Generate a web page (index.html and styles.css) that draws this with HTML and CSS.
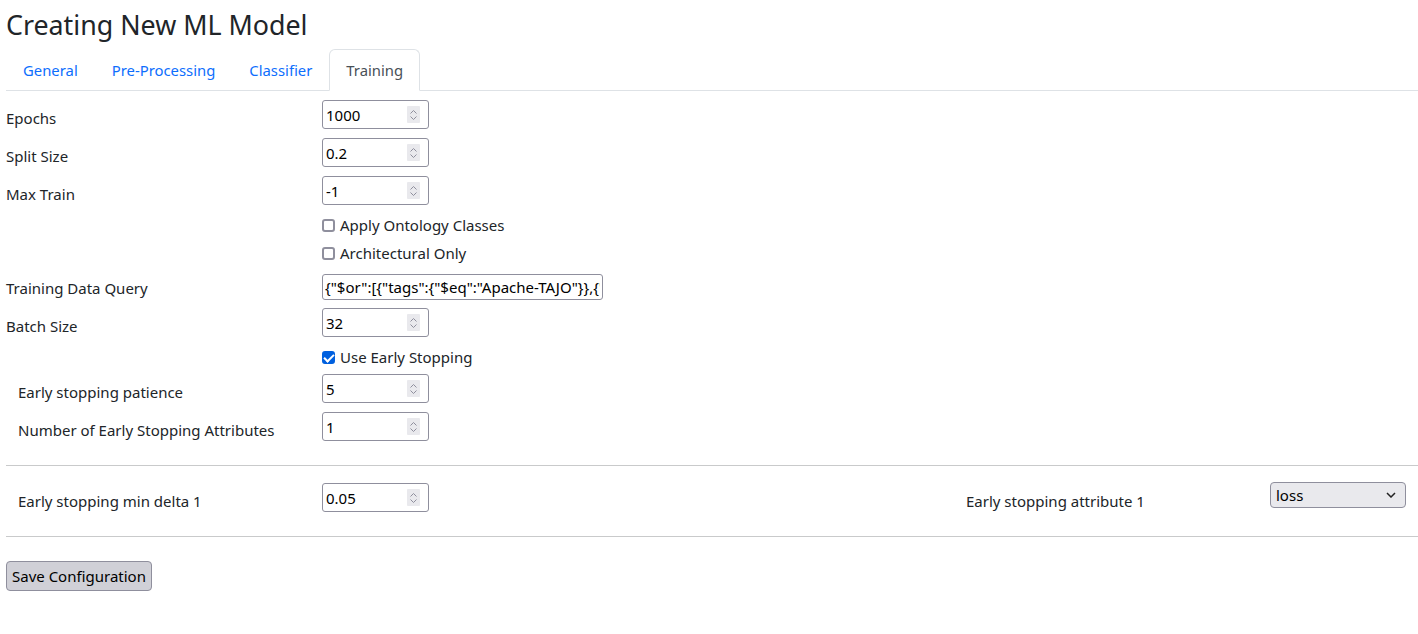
FILE: index.html
```html
<!DOCTYPE html>
<html lang="en">
<head>
<meta charset="utf-8">
<title>Creating New ML Model</title>
<link rel="stylesheet" href="styles.css">
</head>
<body>
<div class="page">
  <h3 class="title">Creating New ML Model</h3>
  <ul class="tabs">
    <li class="tab"><a class="tab-link">General</a></li>
    <li class="tab"><a class="tab-link">Pre-Processing</a></li>
    <li class="tab"><a class="tab-link">Classifier</a></li>
    <li class="tab"><a class="tab-link active">Training</a></li>
  </ul>

  <form class="form">
    <div class="row row-num">
      <label class="lbl">Epochs</label>
      <div class="num"><input class="num-input" type="text" value="1000"><span class="spin"><svg width="9" height="14" viewBox="0 0 9 14"><path d="M1.5 5.5 L4.5 2.5 L7.5 5.5 M1.5 8.5 L4.5 11.5 L7.5 8.5" fill="none" stroke="#8f8f9d" stroke-width="1"/></svg></span></div>
    </div>
    <div class="row row-num">
      <label class="lbl">Split Size</label>
      <div class="num"><input class="num-input" type="text" value="0.2"><span class="spin"><svg width="9" height="14" viewBox="0 0 9 14"><path d="M1.5 5.5 L4.5 2.5 L7.5 5.5 M1.5 8.5 L4.5 11.5 L7.5 8.5" fill="none" stroke="#8f8f9d" stroke-width="1"/></svg></span></div>
    </div>
    <div class="row row-num row-before-check">
      <label class="lbl">Max Train</label>
      <div class="num"><input class="num-input" type="text" value="-1"><span class="spin"><svg width="9" height="14" viewBox="0 0 9 14"><path d="M1.5 5.5 L4.5 2.5 L7.5 5.5 M1.5 8.5 L4.5 11.5 L7.5 8.5" fill="none" stroke="#8f8f9d" stroke-width="1"/></svg></span></div>
    </div>
    <div class="row row-check">
      <span class="lbl-empty"></span>
      <label class="check"><input class="cb" type="checkbox"><span>Apply Ontology Classes</span></label>
    </div>
    <div class="row row-check row-check-last">
      <span class="lbl-empty"></span>
      <label class="check"><input class="cb" type="checkbox"><span>Architectural Only</span></label>
    </div>
    <div class="row row-query">
      <label class="lbl">Training Data Query</label>
      <input class="text-input" type="text" value='{"$or":[{"tags":{"$eq":"Apache-TAJO"}},{"tags":{"$eq":"Apache-Hadoop"}}]}'>
    </div>
    <div class="row row-num row-before-check">
      <label class="lbl">Batch Size</label>
      <div class="num"><input class="num-input" type="text" value="32"><span class="spin"><svg width="9" height="14" viewBox="0 0 9 14"><path d="M1.5 5.5 L4.5 2.5 L7.5 5.5 M1.5 8.5 L4.5 11.5 L7.5 8.5" fill="none" stroke="#8f8f9d" stroke-width="1"/></svg></span></div>
    </div>
    <div class="row row-check row-check-es">
      <span class="lbl-empty"></span>
      <label class="check"><input class="cb" type="checkbox" checked><span>Use Early Stopping</span></label>
    </div>
    <div class="row row-num">
      <label class="lbl lbl-indent">Early stopping patience</label>
      <div class="num"><input class="num-input" type="text" value="5"><span class="spin"><svg width="9" height="14" viewBox="0 0 9 14"><path d="M1.5 5.5 L4.5 2.5 L7.5 5.5 M1.5 8.5 L4.5 11.5 L7.5 8.5" fill="none" stroke="#8f8f9d" stroke-width="1"/></svg></span></div>
    </div>
    <div class="row row-num row-last">
      <label class="lbl lbl-indent">Number of Early Stopping Attributes</label>
      <div class="num"><input class="num-input" type="text" value="1"><span class="spin"><svg width="9" height="14" viewBox="0 0 9 14"><path d="M1.5 5.5 L4.5 2.5 L7.5 5.5 M1.5 8.5 L4.5 11.5 L7.5 8.5" fill="none" stroke="#8f8f9d" stroke-width="1"/></svg></span></div>
    </div>

    <hr class="sep sep-top">

    <div class="attr-row">
      <div class="attr-group attr-group-main">
        <label class="lbl lbl-indent">Early stopping min delta 1</label>
        <div class="num"><input class="num-input" type="text" value="0.05"><span class="spin"><svg width="9" height="14" viewBox="0 0 9 14"><path d="M1.5 5.5 L4.5 2.5 L7.5 5.5 M1.5 8.5 L4.5 11.5 L7.5 8.5" fill="none" stroke="#8f8f9d" stroke-width="1"/></svg></span></div>
      </div>
      <div class="attr-group">
        <label class="lbl lbl-indent">Early stopping attribute 1</label>
        <div class="select-wrap">
          <select class="select"><option>loss</option><option>accuracy</option></select>
          <svg class="select-arrow" width="10" height="6" viewBox="0 0 10 6"><path d="M1 1 L5 5 L9 1" fill="none" stroke="#222" stroke-width="1.5"/></svg>
        </div>
      </div>
    </div>

    <hr class="sep sep-bottom">

    <button class="btn" type="button">Save Configuration</button>
  </form>
</div>
</body>
</html>
```

FILE: styles.css
```css
* { box-sizing: border-box; }

html, body {
  margin: 0;
  padding: 0;
  background: #ffffff;
}

body {
  font-family: "Noto Sans", "Open Sans", sans-serif;
  font-size: 15px;
  line-height: 24px;
  color: #212529;
}

.page {
  padding-left: 6px;
}

.title {
  margin: 8px 0 7px 0;
  font-size: 26.8px;
  line-height: 34px;
  font-weight: 400;
  color: #212529;
}

.tabs {
  display: flex;
  list-style: none;
  margin: 0;
  padding: 0;
  border-bottom: 1px solid #dee2e6;
}

.tab {
  margin-bottom: -1px;
}

.tab-link {
  display: block;
  padding: 8px 16px;
  border: 1px solid transparent;
  border-top-left-radius: 6px;
  border-top-right-radius: 6px;
  font-size: 14.85px;
  color: #0d6efd;
  cursor: pointer;
}

.tab-link.active {
  color: #495057;
  background: #ffffff;
  border-color: #dee2e6 #dee2e6 #ffffff;
}

.form {
  padding-top: 9px;
}

.row {
  display: grid;
  grid-template-columns: 316px auto;
  align-items: start;
  justify-items: start;
}

.row-num { height: 29px; margin-bottom: 9px; }
.row-before-check { margin-bottom: 8px; }
.row-check { height: 24px; margin-bottom: 4px; }
.row-check-last { margin-bottom: 5px; }
.row-check-es { margin-bottom: 5px; }
.row-last { margin-bottom: 0; }
.row-query { height: 30px; margin-bottom: 8px; }

.lbl {
  display: block;
  padding-top: 6px;
  line-height: 24px;
}

.lbl-indent {
  padding-left: 12px;
}

.num {
  display: flex;
  align-items: center;
  width: 107px;
  height: 29px;
  border: 1px solid #8f8f9d;
  border-radius: 3px;
  background: #ffffff;
}

.num-input {
  flex: 1;
  min-width: 0;
  border: 0;
  outline: none;
  padding: 0 0 0 3px;
  font: inherit;
  color: #000000;
  background: transparent;
  height: 27px;
}

.spin {
  display: flex;
  align-items: center;
  justify-content: center;
  width: 13px;
  height: 17px;
  margin-right: 8px;
  background: #e9e9ed;
  border-radius: 1px;
}

.text-input {
  width: 281px;
  height: 26px;
  margin-top: 4px;
  border: 1px solid #8f8f9d;
  border-radius: 3px;
  padding: 0 2px;
  font: inherit;
  color: #000000;
  outline: none;
}

.check {
  display: flex;
  align-items: center;
  gap: 5px;
  line-height: 24px;
}

.cb {
  appearance: none;
  -webkit-appearance: none;
  margin: 0;
  width: 13px;
  height: 13px;
  border: 2px solid #8f8f9d;
  border-radius: 3px;
  background: #ffffff;
  position: relative;
}

.cb:checked {
  background: #0060df;
  border-color: #0060df;
}

.cb:checked::after {
  content: "";
  position: absolute;
  left: 2px;
  top: -1px;
  width: 4px;
  height: 8px;
  border: solid #ffffff;
  border-width: 0 2px 2px 0;
  transform: rotate(45deg);
}

.sep {
  margin: 0;
  border: 0;
  border-top: 1px solid #c9cacb;
}

.sep-top { margin-top: 24px; }
.sep-bottom { margin-top: 24px; }

.attr-row {
  display: flex;
  padding-top: 17px;
  height: 46px;
}

.attr-group {
  display: grid;
  grid-template-columns: 316px auto;
  align-items: start;
}

.attr-group-main {
  width: 948px;
}

.select-wrap {
  position: relative;
  width: 136px;
  height: 26px;
  margin-top: -1px;
}

.select {
  appearance: none;
  -webkit-appearance: none;
  width: 136px;
  height: 26px;
  border: 1px solid #8f8f9d;
  border-radius: 4px;
  background: #e9e9ed;
  font: inherit;
  color: #000000;
  padding: 0 5px;
}

.select-arrow {
  position: absolute;
  right: 10px;
  top: 10px;
}

.btn {
  margin-top: 24px;
  height: 30px;
  padding: 0 5px;
  border: 1px solid #8f8f9d;
  border-radius: 4px;
  background: #d0d0d7;
  font: inherit;
  color: #000000;
}
```
